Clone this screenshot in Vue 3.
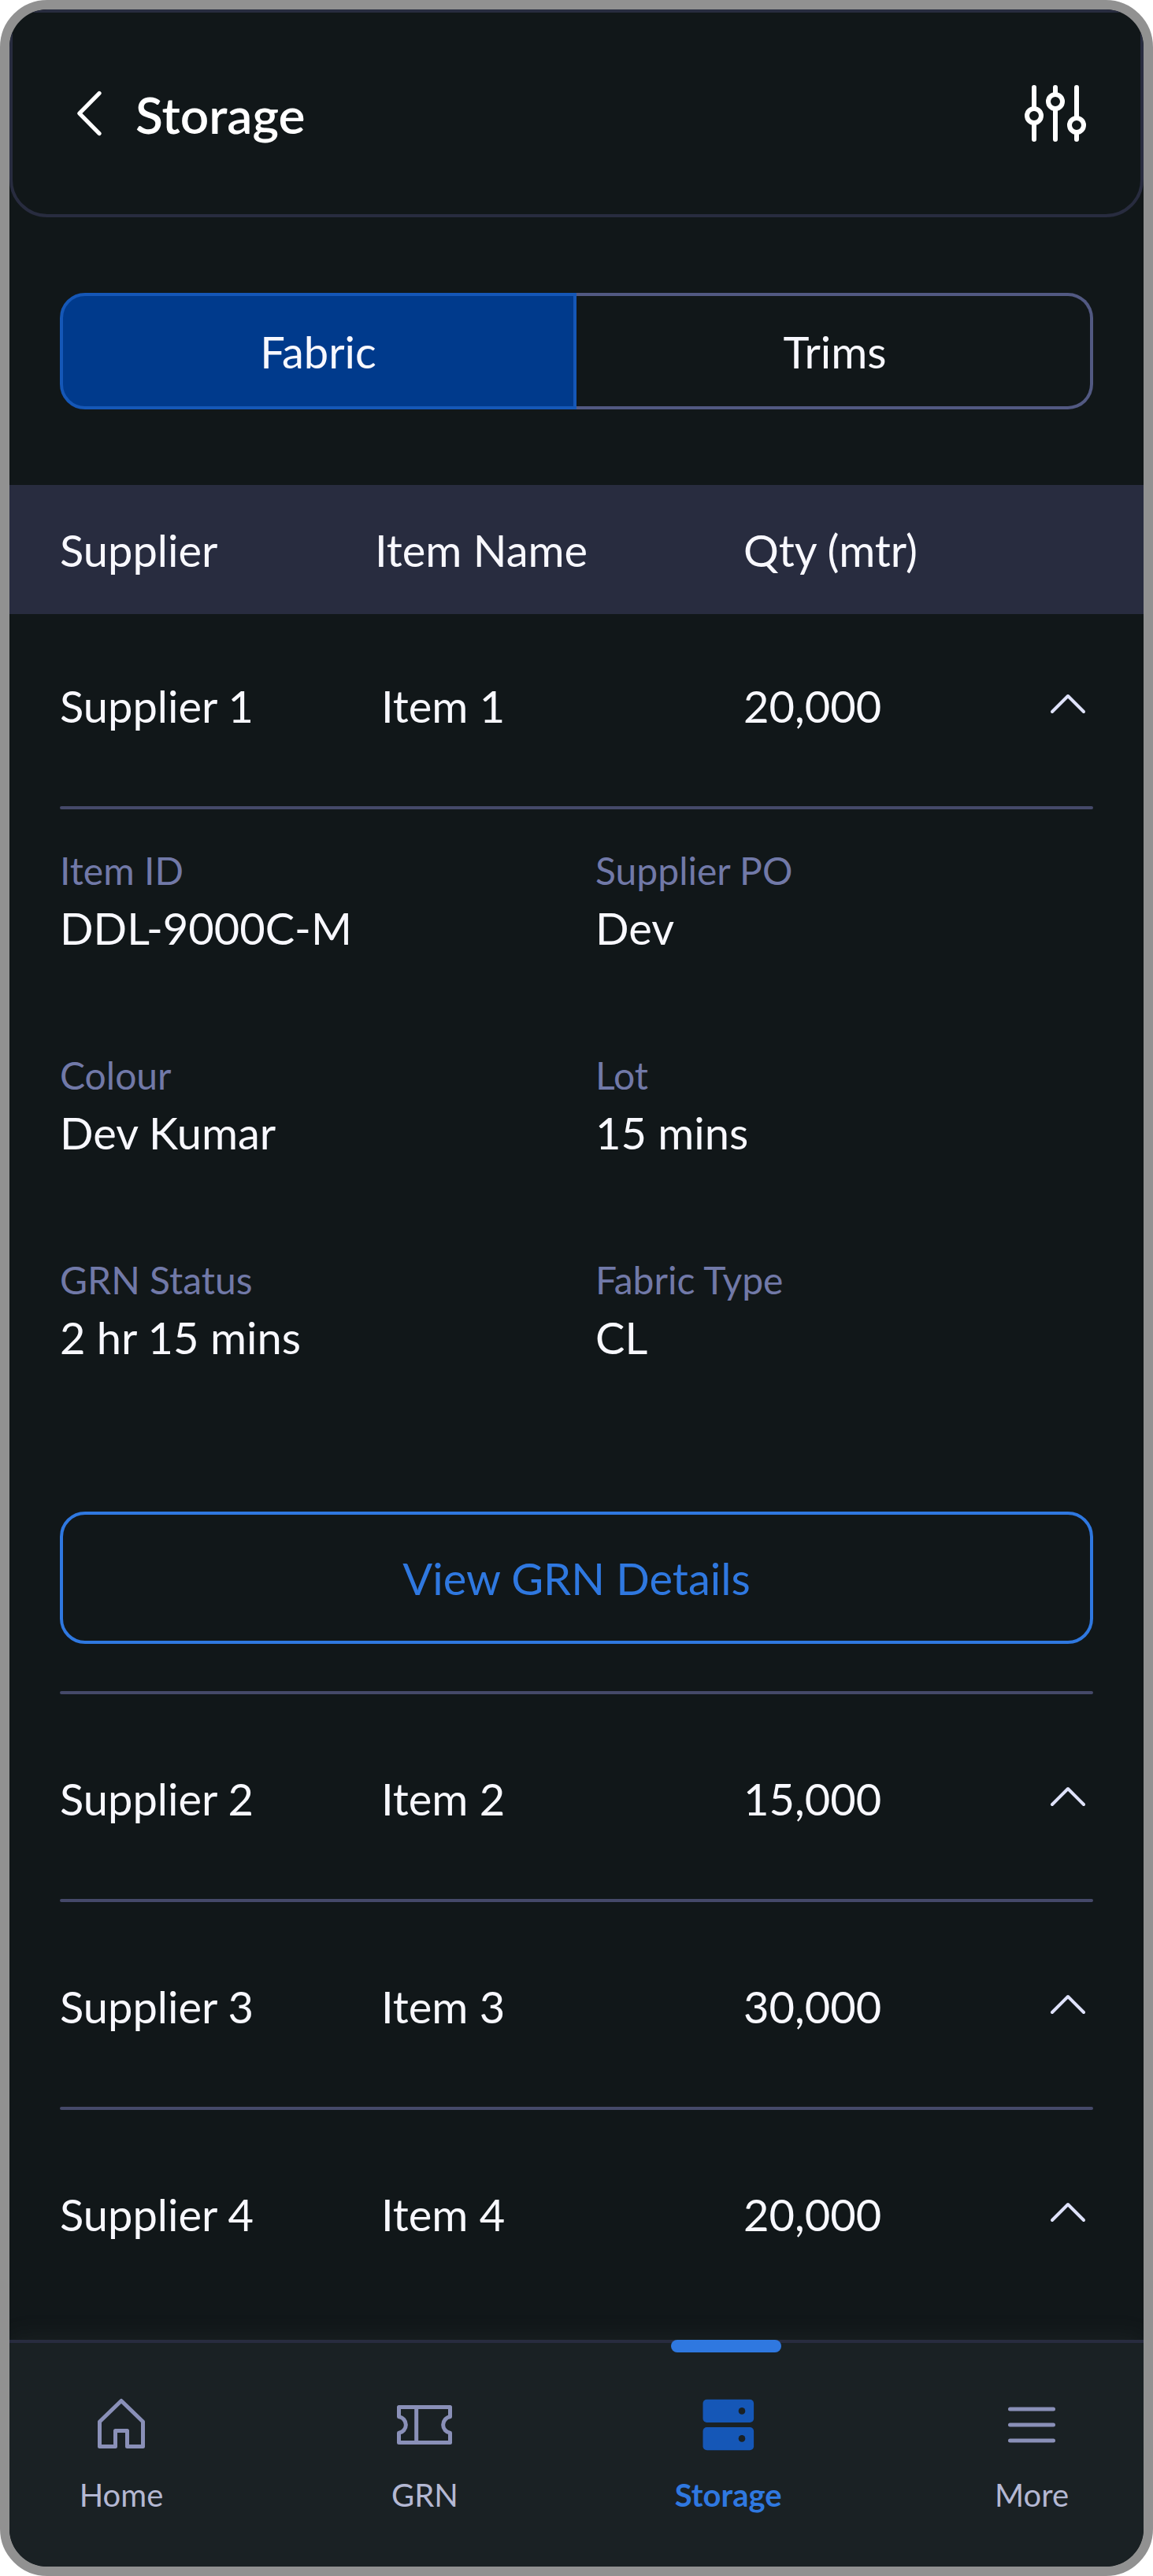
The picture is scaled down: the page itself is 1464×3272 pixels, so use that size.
<script setup>
import { ref } from "vue";

const tabs = ["Fabric", "Trims"];
const activeTab = ref("Fabric");

const rows = [
  { id: 1, supplier: "Supplier 1", item: "Item 1", qty: "20,000" },
  { id: 2, supplier: "Supplier 2", item: "Item 2", qty: "15,000" },
  { id: 3, supplier: "Supplier 3", item: "Item 3", qty: "30,000" },
  { id: 4, supplier: "Supplier 4", item: "Item 4", qty: "20,000" },
];
const openedRow = ref(1);

const details = [
  { label: "Item ID", value: "DDL-9000C-M" },
  { label: "Supplier PO", value: "Dev" },
  { label: "Colour", value: "Dev Kumar" },
  { label: "Lot", value: "15 mins" },
  { label: "GRN Status", value: "2 hr 15 mins" },
  { label: "Fabric Type", value: "CL" },
];

const navItems = ["Home", "GRN", "Storage", "More"];
const activeNav = ref("Storage");

function toggleRow(id) {
  openedRow.value = openedRow.value === id ? null : id;
}
</script>

<template>
  <div class="screen">
    <header class="header">
      <div class="header-left">
        <svg class="back" viewBox="0 0 64 64">
          <path d="M42 6.500 16.800 32 42 57.500" />
        </svg>
        <h1>Storage</h1>
      </div>
      <svg class="filter" viewBox="0 0 96 96">
        <path d="M21 15v27M21 60v21M48 15v9M48 42v39M75 15v39M75 72v9" />
        <circle cx="21" cy="51" r="9" />
        <circle cx="48" cy="33" r="9" />
        <circle cx="75" cy="63" r="9" />
      </svg>
    </header>

    <main class="content">
      <div class="tabs">
        <button
          v-for="tab in tabs"
          :key="tab"
          class="tab"
          :class="{ active: activeTab === tab }"
          @click="activeTab = tab"
        >
          {{ tab }}
        </button>
      </div>

      <div class="table-head">
        <span>Supplier</span>
        <span>Item Name</span>
        <span>Qty (mtr)</span>
      </div>

      <div class="list">
        <div v-for="row in rows" :key="row.id" class="entry">
          <div class="row" @click="toggleRow(row.id)">
            <span>{{ row.supplier }}</span>
            <span>{{ row.item }}</span>
            <span>{{ row.qty }}</span>
            <svg class="chevron" viewBox="0 0 64 64">
              <path d="M12 39 32 19 52 39" />
            </svg>
          </div>
          <div class="divider"></div>

          <template v-if="openedRow === row.id">
            <div class="details">
              <div v-for="d in details" :key="d.label" class="detail">
                <div class="label">{{ d.label }}</div>
                <div class="value">{{ d.value }}</div>
              </div>
            </div>
            <button class="view-btn">View GRN Details</button>
            <div class="divider"></div>
          </template>
        </div>
      </div>
    </main>

    <nav class="nav">
      <button
        v-for="name in navItems"
        :key="name"
        class="nav-item"
        :class="{ active: activeNav === name }"
        @click="activeNav = name"
      >
        <svg class="nav-icon" viewBox="0 0 80 80">
          <path
            v-if="name === 'Home'"
            d="M12.500 67.500V36L40 9.500 67.500 36v31.500h-20v-20h-15v20z"
          />
          <path
            v-else-if="name === 'GRN'"
            d="M7.500 17.500h65v12.300a10.300 10.300 0 0 0 0 20.400v12.300h-65V50.200a10.300 10.300 0 0 0 0-20.400zM29.700 17.500v45"
          />
          <g v-else-if="name === 'Storage'" class="solid">
            <rect x="7.500" y="7.700" width="64.600" height="29.300" rx="5" />
            <rect x="7.500" y="43" width="64.600" height="29.300" rx="5" />
            <circle cx="57" cy="22.400" r="4.300" />
            <circle cx="57" cy="57.400" r="4.300" />
          </g>
          <path v-else d="M12.500 20h55M12.500 40h55M12.500 60h55" />
        </svg>
        <span class="nav-label">{{ name }}</span>
      </button>
    </nav>
  </div>
</template>

<style>
body {
  margin: 0;
  background: #fff;
}
</style>

<style scoped>
.screen {
  width: 1464px;
  height: 3272px;
  box-sizing: border-box;
  border: 12px solid #919191;
  border-radius: 60px;
  overflow: hidden;
  display: flex;
  flex-direction: column;
  background: #111719;
  color: #f8f8fe;
  font-family: Lato, "Liberation Sans", sans-serif;
  font-size: 56px;
  line-height: 68px;
}

button {
  font: inherit;
  color: inherit;
  background: none;
  border: none;
  padding: 0;
  cursor: pointer;
}

svg {
  display: block;
  fill: none;
  stroke-linecap: round;
  stroke-linejoin: round;
}

.header {
  height: 264px;
  flex: none;
  box-sizing: border-box;
  padding: 0 60px 0 68px;
  border: 4px solid #282c3f;
  border-radius: 0 0 48px 48px;
  display: flex;
  align-items: center;
  justify-content: space-between;
}

.header-left {
  display: flex;
  align-items: center;
  gap: 24px;
}

.back {
  width: 64px;
  height: 64px;
  stroke: #fff;
  stroke-width: 5.3;
}

h1 {
  margin: 4px 0 0;
  font-size: 64px;
  font-weight: 600;
  line-height: 78px;
  color: #fff;
}

.filter {
  width: 96px;
  height: 96px;
  stroke: #fff;
  stroke-width: 6;
}

.content {
  flex: 1;
  min-height: 0;
  overflow: hidden;
}

.tabs {
  display: flex;
  height: 148px;
  margin: 96px 64px;
}

.tab {
  width: 50%;
  box-sizing: border-box;
  padding: 2px 0 0 4px;
  border: 4px solid #525982;
  border-left: none;
  border-radius: 0 32px 32px 0;
}

.tab:first-child {
  padding: 2px 4px 0 0;
  border-left: 4px solid #525982;
  border-right: none;
  border-radius: 32px 0 0 32px;
}

.tab.active {
  padding: 2px 0 0;
  background: #003a8c;
  border: 4px solid #1557b7;
}

.table-head,
.row {
  display: grid;
  align-items: center;
  box-sizing: border-box;
}

.table-head {
  grid-template-columns: 400px 468px 1fr;
  height: 164px;
  padding: 2px 64px 0;
  background: #282c3f;
}

.list {
  margin: -16px 64px 0;
}

.row {
  grid-template-columns: 408px 460px 1fr 64px;
  height: 260px;
  padding-top: 6px;
  cursor: pointer;
}

.chevron {
  width: 64px;
  height: 64px;
  stroke: #dfe2fb;
  stroke-width: 4;
}

.divider {
  height: 4px;
  border-radius: 2px;
  background: #454969;
}

.entry:last-child .divider {
  display: none;
}

.details {
  display: grid;
  grid-template-columns: 680px 1fr;
  row-gap: 114px;
  padding-top: 42px;
}

.label {
  font-size: 48px;
  line-height: 72px;
  color: #7179a8;
}

.value {
  line-height: 74px;
}

.view-btn {
  display: block;
  width: 100%;
  height: 168px;
  margin: 184px 0 60px;
  padding-top: 2px;
  border: 4px solid #2f78e0;
  border-radius: 32px;
  color: #2f78e0;
}

.nav {
  flex: none;
  height: 288px;
  box-sizing: border-box;
  padding: 0 72px;
  border-top: 4px solid #282c3f;
  background: #1a2124;
  box-shadow: 0 -4px 32px rgba(145, 145, 145, 0.08);
  display: flex;
  justify-content: space-between;
}

.nav-item {
  position: relative;
  width: 140px;
  padding-top: 64px;
  display: flex;
  flex-direction: column;
  align-items: center;
  gap: 25px;
  color: #b4b8d3;
}

.nav-icon {
  width: 80px;
  height: 80px;
  stroke: #8a90b8;
  stroke-width: 5;
}

.nav-label {
  font-size: 40px;
  line-height: 48px;
}

.nav-item.active {
  color: #2f78e0;
  font-weight: 700;
}

/* marker sits on top of the nav border */
.nav-item.active::before {
  content: "";
  position: absolute;
  top: -4px;
  left: -3px;
  width: 140px;
  height: 16px;
  border-radius: 8px;
  background: #2f78e0;
}

.solid {
  stroke: none;
  fill: #8a90b8;
}

.solid circle {
  fill: #1a2124;
}

.active .solid rect {
  fill: #1557b7;
}
</style>
